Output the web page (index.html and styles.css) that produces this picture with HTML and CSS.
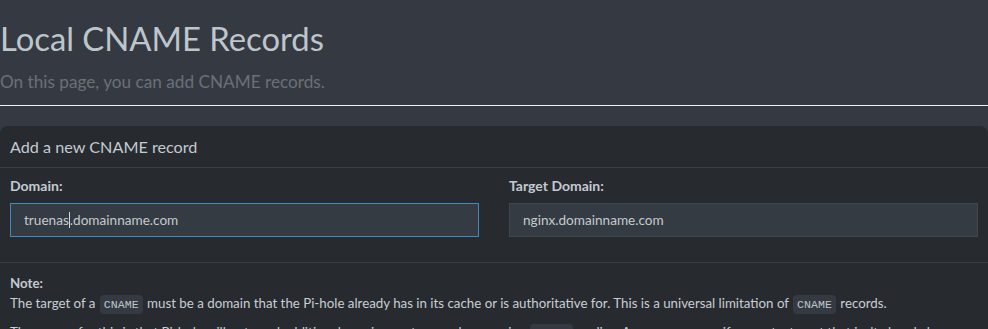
FILE: index.html
```html
<!DOCTYPE html>
<html lang="en">
<head>
<meta charset="utf-8">
<title>Local CNAME Records</title>
<link rel="stylesheet" href="styles.css">
</head>
<body>
<section class="content-header">
  <h1 class="page-title">Local CNAME Records</h1>
  <p class="page-sub">On this page, you can add CNAME records.</p>
</section>
<section class="card">
  <div class="card-header">
    <h3 class="card-title">Add a new CNAME record</h3>
  </div>
  <div class="card-body">
    <div class="field">
      <label class="field-label">Domain:</label>
      <div class="input focused" role="textbox">truenas<span class="caret"></span>.domainname.com</div>
    </div>
    <div class="field">
      <label class="field-label">Target Domain:</label>
      <div class="input" role="textbox">nginx.domainname.com</div>
    </div>
  </div>
  <div class="card-footer">
    <p class="note-title">Note:</p>
    <p class="note-text">The target of a <code>CNAME</code> must be a domain that the Pi-hole already has in its cache or is authoritative for. This is a universal limitation of <code>CNAME</code> records.</p>
    <p class="note-text">The reason for this is that Pi-hole will not send additional queries upstream when serving <code>CNAME</code> replies. As consequence, if you set a target that isn't already known, the reply to the client may be incomplete.</p>
  </div>
</section>
</body>
</html>
```
FILE: styles.css
```css
html, body {
  margin: 0;
  padding: 0;
}
body {
  background: #353a42;
  font-family: Lato, "Noto Sans", sans-serif;
  color: #bec5cb;
  height: 329px;
  overflow: hidden;
}
.content-header {
  padding: 19px 0 11px 0;
  border-bottom: 1px solid #f2f2f2;
}
.page-title {
  margin: 0;
  font-size: 32.8px;
  font-weight: 400;
  line-height: 40px;
  color: #bec5cb;
}
.page-sub {
  margin: 11px 0 0;
  font-size: 17.2px;
  line-height: 24px;
  color: #6b7077;
}
.card {
  margin-top: 20px;
  background: #272b30;
  border-radius: 8px 8px 0 0;
}
.card-header {
  height: 41px;
  border-bottom: 1px solid #3a3f46;
  display: flex;
  align-items: center;
  padding: 0 10px;
}
.card-title {
  margin: 0;
  font-size: 16.2px;
  font-weight: 400;
  color: #c3cad0;
}
.card-body {
  display: grid;
  grid-template-columns: 1fr 1fr;
  column-gap: 30px;
  padding: 8px 10px 25px;
  border-bottom: 1px solid #3a3f46;
}
.field-label {
  display: block;
  font-weight: 700;
  font-size: 14px;
  line-height: 20px;
  margin-bottom: 7px;
  color: #c3cad0;
}
.input {
  height: 34px;
  box-sizing: border-box;
  background: #353b42;
  border: 1px solid #40464d;
  padding: 0 13px;
  font-size: 13.6px;
  line-height: 32px;
  color: #c3cad0;
  white-space: nowrap;
}
.input.focused {
  border-color: #3c8dbc;
}
.caret {
  display: inline-block;
  width: 1px;
  height: 16px;
  background: #d0d6db;
  vertical-align: -3px;
}
.card-footer {
  padding: 10px 10px 0;
}
.note-title {
  margin: 0;
  font-weight: 700;
  font-size: 13.3px;
  line-height: 20px;
  color: #c3cad0;
}
.note-text {
  margin: 0 0 7px;
  font-size: 13.3px;
  line-height: 20px;
  color: #c8ced3;
}
code {
  font-family: "Liberation Mono", monospace;
  font-size: 11.6px;
  background: #353a42;
  border-radius: 4px;
  padding: 3px 4px;
  margin: 0 1px;
  color: #bec5cb;
}
```
